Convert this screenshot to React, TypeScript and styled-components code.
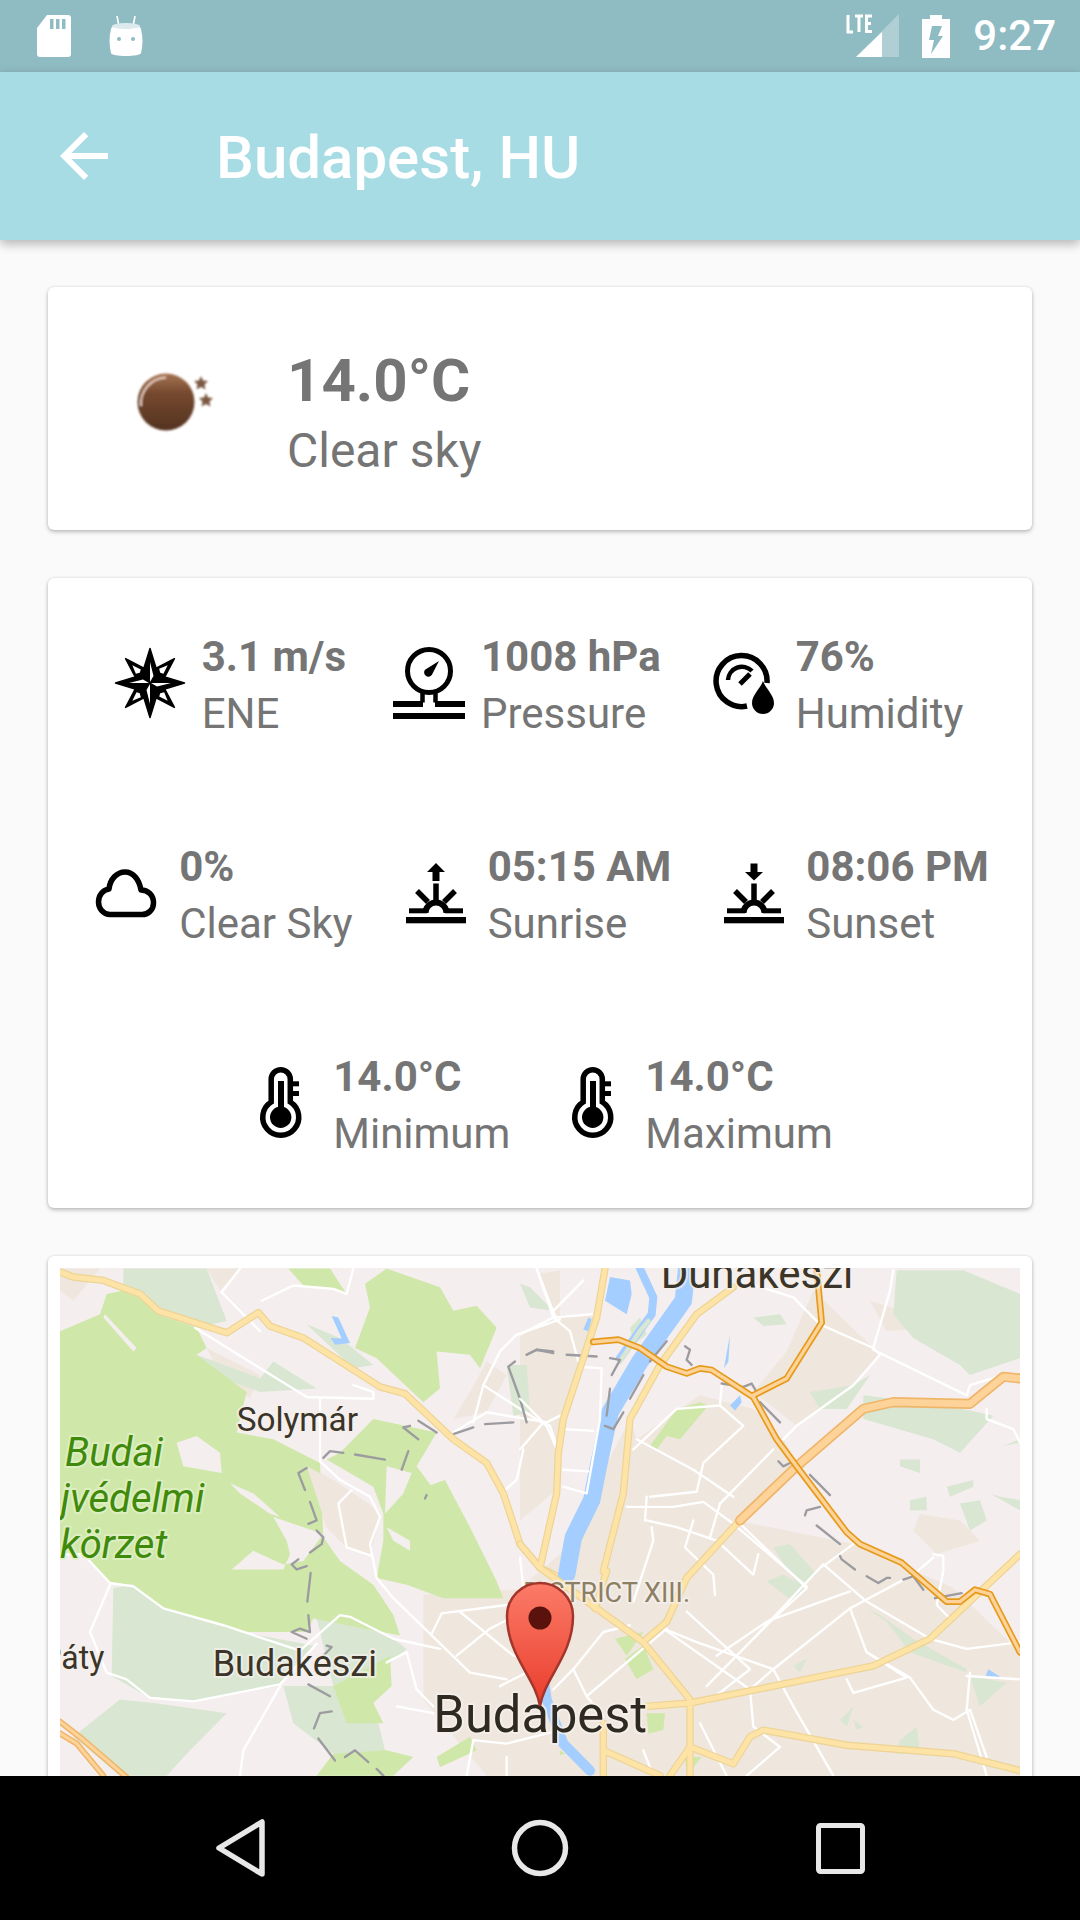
import React from "react";
import styled, { createGlobalStyle } from "styled-components";

const Global = createGlobalStyle`
  html, body { margin: 0; padding: 0; background: #fafafa; }
  body { font-family: Roboto, "Liberation Sans", sans-serif; }
`;

const Screen = styled.div`
  width: 1080px; height: 1920px; display: flex; flex-direction: column; overflow: hidden; background: #fafafa;
`;
const StatusBar = styled.div`
  height: 72px; flex: none; background: #8fbbc3; display: flex; align-items: center; justify-content: space-between; padding: 0 24px 0 37px; box-sizing: border-box;
`;
const StatusGroup = styled.div`
  display: flex; align-items: center; gap: ${(p: { $gap: number }) => p.$gap}px;
`;
const Clock = styled.span`
  color: #fff; font-size: 42px; font-weight: 500; line-height: 72px; margin-left: 1px;
`;
const AppBar = styled.header`
  height: 168px; flex: none; background: #a7dce5; display: flex; align-items: center; padding-left: 48px; gap: 96px; position: relative; z-index: 2;
  box-shadow: 0 4px 10px rgba(0,0,0,.28);
`;
const Title = styled.h1`
  margin: 4px 0 0; color: #fff; font-size: 60px; font-weight: 500; line-height: 72px;
`;
const Content = styled.main`
  flex: 1; min-height: 0; overflow: hidden; display: flex; flex-direction: column; gap: 48px; padding: 47px 48px 0;
`;
const Card = styled.section`
  background: #fff; border-radius: 6px; flex: none; box-shadow: 0 2px 4px rgba(0,0,0,.24), 0 0 3px rgba(0,0,0,.1);
`;
const SummaryCard = styled(Card)`
  height: 243px; display: flex; align-items: center; padding-left: 80px; gap: 46px; box-sizing: border-box;
`;
const WeatherSvg = styled.svg`
  display: block; flex: none; width: 113px; height: 70px; margin-bottom: 15px;
`;
const SummaryText = styled.div`
  display: flex; flex-direction: column; gap: 4px; padding-top: 8px;
`;
const Temperature = styled.div`
  font-size: 60px; font-weight: 700; line-height: 72px; color: #757575;
`;
const Condition = styled.div`
  font-size: 48px; line-height: 60px; color: #757575;
`;
const DetailsCard = styled(Card)`
  height: 630px; padding: 50px 0 0; box-sizing: border-box; display: flex; flex-direction: column; gap: 96px;
`;
const DetailRow = styled.div<{ $nudge: number }>`
  display: flex; justify-content: center; gap: 47px; padding-right: ${(p) => p.$nudge}px;
`;
const Detail = styled.div`
  display: flex; align-items: center; gap: 16px;
`;
const DetailText = styled.div`
  display: flex; flex-direction: column;
`;
const DetailValue = styled.div`
  font-size: 42px; font-weight: 700; line-height: 57px; color: #757575; white-space: nowrap;
`;
const DetailLabel = styled.div`
  font-size: 42px; line-height: 57px; color: #757575; white-space: nowrap;
`;
const MapCard = styled(Card)`
  padding: 12px; height: 600px; box-sizing: border-box;
`;
const MapSvg = styled.svg`
  display: block; width: 960px; height: 560px; background: #f5eeef;
`;
const NavBar = styled.nav`
  height: 144px; flex: none; background: #000; display: flex; align-items: center; justify-content: center; position: relative; z-index: 2;
`;
const NavIcon = styled.svg`
  display: block; width: 720px; height: 144px;
`;

type IconProps = { children: React.ReactNode };
const Glyph = styled.svg`
  display: block; flex: none; width: 72px; height: 72px; margin-bottom: 4px;
`;
const DetailIcon = ({ children }: IconProps) => <Glyph viewBox="0 0 72 72">{children}</Glyph>;

const polar = (n: number[], cx = 36, cy = 36) =>
  n.map((r, i) => {
    const a = (i * Math.PI) / 8 - Math.PI / 2;
    return `${(cx + r * Math.cos(a)).toFixed(2)},${(cy + r * Math.sin(a)).toFixed(2)}`;
  }).join(" ");

const Compass = () => (
  <DetailIcon>
    <polygon fill="#000" stroke="#000" strokeWidth="1.5" strokeLinejoin="round" points={polar([34.5,16,34.5,16,34.5,16,34.5,16,34.5,16,34.5,16,34.5,16,34.5,16])} />
    {[0, 90, 180, 270].map((r) => (
      <polygon key={r} transform={`rotate(${r} 36 36)`} fill="#fff" points="36,35 36,15 39.5,29" />
    ))}
    {[45, 135, 225, 315].map((r) => (
      <polygon key={r} transform={`rotate(${r} 36 36)`} fill="#fff" points="36,21.5 32.5,19.5 36,11 39,20" />
    ))}
  </DetailIcon>
);
const Pressure = () => (
  <DetailIcon>
    <circle cx="36" cy="24" r="21.5" fill="none" stroke="#000" strokeWidth="5" />
    <path d="M46 14 L38.8 28 A4 4 0 1 1 32 22.8 Z" fill="#000" />
    <path d="M29.5 43 V55.5 M42.5 43 V55.5" stroke="#000" strokeWidth="4.5" fill="none" />
    <rect x="0" y="54" width="30" height="6" />
    <rect x="42" y="54" width="30" height="6" />
    <rect x="0" y="66" width="72" height="6" />
  </DetailIcon>
);
const Humidity = () => (
  <DetailIcon>
    <path d="M59 36 A25.5 25.5 0 1 0 39 59" fill="none" stroke="#000" strokeWidth="5.5" />
    <path d="M20 33 A14 14 0 0 1 44 24" fill="none" stroke="#000" strokeWidth="4.5" />
    <path d="M32 37 L42 27" stroke="#000" strokeWidth="5" />
    <path d="M55 34 C58 42 66 48 66 56 A11 11 0 0 1 44 56 C44 48 52 42 55 34 Z" fill="#000" />
  </DetailIcon>
);
const Cloud = () => (
  <DetailIcon>
    <path d="M19 57.5 C12 57.5 7.5 51 7.5 45 C7.5 38 12 33 18 32 C19 22 26 15 34 15 C42 15 48 22 50 33 C57 33 62.5 38 62.5 46 C62.5 53 57 57.5 51 57.5 Z" fill="none" stroke="#000" strokeWidth="5.5" strokeLinejoin="round" />
  </DetailIcon>
);
const SunBase = () => (
  <>
    <rect x="6" y="60" width="60" height="6.3" />
    <rect x="9" y="51.3" width="18" height="5" />
    <rect x="45" y="51.3" width="18" height="5" />
    <path d="M25.5 56 A10.5 10.5 0 0 1 46.5 56" fill="none" stroke="#000" strokeWidth="6" />
    <path d="M36 26.5 V44 M17 34 L28 45 M55 34 L44 45" stroke="#000" strokeWidth="5.5" fill="none" />
  </>
);
const Sunrise = () => (
  <DetailIcon>
    <SunBase />
    <polygon points="36,6 45,15 39.5,15 39.5,24 32.5,24 32.5,15 27,15" />
  </DetailIcon>
);
const Sunset = () => (
  <DetailIcon>
    <SunBase />
    <polygon points="36,23.5 45,15 39.5,15 39.5,6.5 32.5,6.5 32.5,15 27,15" />
  </DetailIcon>
);
const Thermometer = () => (
  <DetailIcon>
    <path d="M26.2 35 V12.3 A9.5 9.5 0 0 1 45.3 12.3 V35 A18 18 0 1 1 26.2 35 Z" fill="none" stroke="#000" strokeWidth="5.5" />
    <rect x="33" y="14" width="6" height="30" />
    <circle cx="35.7" cy="50.3" r="10.7" />
    <rect x="47" y="14.3" width="7" height="5" />
    <rect x="47" y="24" width="7" height="5" />
  </DetailIcon>
);

const WeatherIcon = () => (
  <WeatherSvg viewBox="0 0 113 70">
    <defs>
      <linearGradient id="moon" x1="0" y1="0" x2="0" y2="1">
        <stop offset="0" stopColor="#a67452" />
        <stop offset=".35" stopColor="#75492f" />
        <stop offset="1" stopColor="#543320" />
      </linearGradient>
      <filter id="soft"><feGaussianBlur stdDeviation=".9" /></filter>
    </defs>
    <g filter="url(#soft)">
      <circle cx="38" cy="36" r="28.5" fill="url(#moon)" />
      <path d="M13 40 A26 26 0 0 1 38 11.5" fill="none" stroke="#e8d0bf" strokeWidth="2" />
      <polygon fill="#7a5843" points="73,10 75,14.5 80,15 76.5,18.5 77.5,23.5 73,21 68.5,23.5 69.5,18.5 66,15 71,14.5" />
      <polygon fill="#7a5843" points="78,27 80,31.5 85,32 81.5,35.5 82.5,40.5 78,38 73.5,40.5 74.5,35.5 71,32 76,31.5" />
    </g>
  </WeatherSvg>
);

const Line = (p: { d: number[]; c: string; w: number; dash?: string }) => (
  <polyline
    points={p.d.join(" ")} fill="none" stroke={p.c} strokeWidth={p.w} strokeDasharray={p.dash}
    strokeLinejoin="round" strokeLinecap="round"
  />
);

const GREEN = "#cfe8a9", LIGHT = "#d8e6d2", BEIGE = "#efe6dd", PINK = "#f5eeef", WATER = "#a3ceff", WHITE = "#ffffff";

const leftLight = [
  [220,1000,280,990,370,1060,600,1130,820,1170,720,1290,460,1335,320,1320,215,1260],
  [100,1440,240,1330,340,1340,560,1370,450,1480,380,1555,240,1555],
  [250,55,500,55,560,210,470,230,350,190,250,120],
  [470,310,660,380,700,330,830,410,660,420,520,370],
  [1400,340,1460,340,1470,480,1420,490],
  [380,550,590,490,580,530,470,560],
  [730,1290,880,1290,1000,1340,1040,1500,880,1490,760,1400],
  [830,1090,900,1060,1060,1150,1100,1180,1040,1230,880,1290],
  [800,220,900,260,1000,340,940,350],
];
const leftGreen = [
  [60,240,180,190,200,130,250,120,300,140,350,190,470,230,500,290,470,310,620,420,590,540,700,560,840,630,850,850,900,920,1000,990,1060,1080,1080,1140,820,1090,800,1130,600,1130,370,1060,280,990,210,985,130,900,60,900],
  [745,55,870,55,920,130,860,110,790,105],
  [975,100,1040,55,1200,110,1240,180,1310,165,1370,230,1320,350,1290,310,1190,300,1200,410,1150,450,1010,320,945,290,990,170],
  [1030,780,1100,720,1215,680,1290,820,1370,980,1390,1030,1210,1030,1100,990,1010,970,1030,860],
  [1000,500,1190,540,1130,640,1190,720,1030,780,1000,700,860,620,900,600],
  [880,1290,1050,1200,1055,1290,1000,1340,1030,1400,920,1400],
  [880,1490,1040,1480,1120,1500,1060,1555,830,1555],
  [1190,1500,1290,1440,1310,1480,1200,1530],
];
const leftPink = [
  [700,790,850,840,790,920,730,930,640,890,575,945,730,945,750,900,740,860],
  [410,570,470,550,540,600,545,660,430,640],
  [570,690,640,720,720,790,690,780,600,720],
  [195,190,290,290,280,300,190,200],
  [1040,640,1115,660,1090,720,1035,780],
  [1040,820,1110,860,1110,890,1060,860],
];
const leftBeige = [
  [800,640,880,680,1000,760,1020,790,990,900,920,880,860,820],
  [500,55,600,55,540,120],
  [1150,1020,1500,1000,1560,1000,1560,1555,1340,1555,1150,1330],
  [500,290,660,370,630,440,540,370],
  [1500,70,1560,60,1560,200,1520,160],
  [60,55,180,55,100,150,60,120],
  [1140,170,1240,290,1130,280,1050,260],
  [1340,330,1400,370,1340,480,1240,500,1290,420],
];
const rightBeige = [
  [350,560,540,430,700,470,790,560,840,640,650,800,1000,870,1300,1000,1500,1190,1500,1555,0,1555,0,1000,120,900,330,500],
  [0,250,100,200,230,190,130,500,120,700,0,800],
  [880,120,1060,290,1080,310,1000,400,830,520,700,420,800,300],
  [1210,200,1240,230,1100,240,1050,150],
  [1200,780,1320,800,1380,860,1250,900,1180,830],
];
const rightLight = [
  [1130,60,1330,60,1500,130,1500,320,1350,370,1320,340,1180,260,1120,190],
  [1030,430,1120,440,1330,470,1420,490,1320,600,1240,560,1100,520,1030,500],
  [870,420,1000,400,1050,370,980,470,900,470],
  [1140,620,1200,620,1200,660,1140,640],
  [1280,700,1360,680,1360,700,1290,730],
  [1170,740,1220,730,1220,770,1170,770],
  [1320,750,1380,740,1400,800,1350,830],
  [1410,720,1500,770,1500,740,1440,730],
  [760,880,810,870,890,960,840,1000],
  [740,980,790,960,860,1000,820,1040],
  [1040,1060,1100,1100,1170,1190,1340,1250,1340,1240,1180,1150,1080,1080],
  [1350,1260,1460,1280,1380,1350],
  [0,100,30,110,100,180,30,170],
  [700,200,780,190,800,220,730,225],
  [340,280,380,250,360,200,330,230],
  [960,1390,1000,1350,980,1410],
  [1000,1390,1030,1410,1010,1420],
  [1140,1450,1190,1410,1200,1490,1130,1490],
  [820,1230,860,1210,840,1250],
  [1450,580,1500,570,1500,560],
];
const rightGreen = [
  [390,580,470,470,540,450,565,460,480,560,440,550,410,590],
  [130,870,195,780,190,850,130,960],
  [285,1150,370,1130,320,1200],
  [315,1210,370,1170,400,1240,350,1270],
  [380,1370,435,1370,430,1420,385,1430],
  [60,1490,100,1465,135,1490,85,1505],
  [495,1500,545,1500,500,1555],
];
const rightWater = [
  [270,80,330,90,335,130,320,190,255,150],
  [630,460,660,430,665,450,645,475],
  [1395,1265,1405,1240,1445,1265],
  [190,235,205,200,215,205,205,240],
  [612,350,630,250,625,330],
];
const leftWhite = [
  [465,230,800,435,1000,440],[545,125,600,55],[545,125,660,240],[665,150,760,105,880,115,920,130,940,55],
  [840,440,840,625,900,680,990,730,1020,790,990,870,1010,970,1060,1030,1290,1250,1400,1270],
  [935,710,895,750,920,880,995,905],
  [60,900,130,900,210,985,280,995,370,1060,550,1110,780,1185,900,1080,930,1085,1060,1150,1200,1180],
  [210,990,150,1130,200,1250,260,1270,330,1325,460,1335,720,1285,830,1165],
  [720,1290,610,1480,600,1555],[1175,1135,1205,1075,1400,1050],[1250,1200,1350,1120,1410,1090],
  [1260,1070,1420,1200,1500,1220],[1380,1290,1500,1230],[1070,1350,1180,1370],
  [1040,1220,1100,1190,1130,1300,1180,1350],[1240,540,1340,480,1520,510,1560,490],[1330,400,1300,510],
  [1330,400,1380,300,1430,250,1560,205],[1490,55,1550,210],[1520,520,1555,600],[1330,400,1520,520],
  [1450,590,1430,680,1395,710],[1400,1500,1400,1555],[1280,1555,1300,1450,1400,1460,1560,1420],
  [940,400,1000,420,1000,440],[1440,910,1450,1000],
];
const rightWhite = [
  [50,55,100,200,0,250],[100,200,215,190],[100,180,190,90],[100,200,150,240,175,330],
  [175,345,245,350,240,500,200,720,130,700],[130,530,220,535],[130,650,205,655],
  [0,440,70,510,90,520,110,580],[0,590,70,510],[350,560,520,650,640,730],
  [320,760,460,760,550,745,640,810,860,995],[390,730,530,715,550,630,670,520,600,460,605,400],
  [600,460,470,470,340,590],[380,800,470,820,590,860,700,960,715,900],[395,820,400,860,340,1040],
  [380,730,375,800],[520,800,495,880,580,960,585,1020],[600,750,570,850],[600,750,760,590],
  [650,800,860,1000,750,1100,560,1290],[790,560,830,520,1000,400,1080,310,1060,290,900,220,820,140,690,100],
  [1060,290,1110,120,1120,60],[1060,295,1340,430,1350,400,1450,370],
  [910,930,1040,1040,1230,1150,1340,1180,1500,1160],[910,930,700,1150],[1240,900,1270,905,1270,950,1250,1050,1290,1090],
  [1000,870,910,935],[1180,960,1240,910],[990,1010,750,1095,740,1100,590,1200],[1180,960,990,1060,760,1240,690,1300],
  [430,1120,690,1300,700,1410],[430,1120,530,1160,760,1240,820,1350],[440,1120,200,1320],
  [500,1070,690,1240,560,1340],[160,1240,250,1130,330,1110],[990,1060,1040,1190,1160,1265,1000,1310,980,1270],
  [1040,1190,1170,1265,1240,1360,1300,1390,1350,1360,1400,1500],[1350,1250,1340,1360],[1340,1260,1500,1270],
  [1400,470,1400,500,1480,530,1500,570],[700,1410,780,1470,680,1555],[820,1350,940,1555],[540,1400,620,1555],
  [100,1300,160,1240,200,1320,250,1380],[1340,1360,1400,1555],[370,1480,400,1555],
];
const leftDash = [
  [1240,545,1300,525],[1335,515,1420,510],[1460,510,1440,440,1405,345,1425,330],[1460,310,1490,295,1540,305],
  [1190,540,1135,505],[1135,560,1090,525,1110,520],[1105,595,1085,650],[1035,620,945,605],[910,600,870,595,850,615],
  [800,645,775,660,795,710],[810,745,830,800,805,810],[830,830,850,850,845,870,810,895],[775,915,755,930,770,945,800,935],
  [812,955,802,1040],[805,1080,810,1130,780,1120,755,1130,800,1150],[860,1170,875,1175,850,1200],[805,1285,870,1320],
  [875,1365,840,1370,822,1415],[835,1445,885,1510],[915,1500,945,1480,985,1515],[1010,1535,1030,1555],[1160,725,1155,735],
];
const rightDash = [
  [20,310,50,295,100,300],[140,310,230,315],[270,320,300,325,275,370],[270,410,260,490],[310,480,280,530,255,520],
  [330,440,370,370],[390,330,440,270],[495,285,510,295,500,325,515,340],[605,395,670,405,695,395,710,420],[720,450,780,510],
  [775,625,790,640,810,630],[870,665,930,725],[900,760,860,770,855,785],[890,815,960,870],[960,905,965,915,1005,945],
  [1040,965,1075,985,1100,970,1110,970],[1150,975,1180,965,1210,1005],[1245,1030,1325,1015],
];
const rightRoads = [
  [60,940,110,720,115,600,130,500,230,200,255,55],
  [0,870,60,940,230,1060,370,1160,510,1330,510,1555],
  [250,950,310,720,330,500,420,340,530,190,640,110],
  [380,1150,440,1100,500,970,650,810],
  [380,1350,510,1340,1060,1230,1230,1150,1500,900],
  [1500,1540,1300,1490,980,1465,730,1420,690,1440,640,1520,510,1470,450,1555],
  [250,1480,420,1555],[260,950,225,1060],[250,1400,250,1555],
];
const leftRoad = [60,65,100,80,190,90,300,130,355,180,560,245,655,185,690,225,790,260,1020,405,1095,425,1240,560,1340,630,1390,720,1440,870,1500,940,1560,970];

const Poly = ({ sets, fill }: { sets: number[][]; fill: string }) => (
  <>{sets.map((s, i) => <polygon key={i} points={s.join(" ")} fill={fill} />)}</>
);
const Many = ({ sets, c, w, dash }: { sets: number[][]; c: string; w: number; dash?: string }) => (
  <>{sets.map((s, i) => <Line key={i} d={s} c={c} w={w} dash={dash} />)}</>
);
const Label = styled.text<{ $halo?: string }>`
  font-family: Roboto, "Liberation Sans", sans-serif;
  paint-order: stroke; stroke: ${(p) => p.$halo ?? "rgba(245,240,236,.75)"}; stroke-width: 12px; stroke-linejoin: round;
`;

const LEFT = "translate(40 1250) scale(.33333 .33806)";
const RIGHT = "translate(520 1250) scale(.33333 .33806)";

const MapDrawing = () => (
  <MapSvg viewBox="60 1268 960 560">
    <defs>
      <linearGradient id="pin" x1="0" y1="0" x2="0" y2="1">
        <stop offset="0" stopColor="#fb7b68" />
        <stop offset="1" stopColor="#ea3d2c" />
      </linearGradient>
    </defs>
    <g transform={RIGHT}>
      <Poly sets={rightBeige} fill={BEIGE} />
      <Poly sets={rightLight} fill={LIGHT} />
      <Poly sets={rightGreen} fill={GREEN} />
    </g>
    <g transform={LEFT}>
      <Poly sets={leftBeige} fill={BEIGE} />
      <Poly sets={leftLight} fill={LIGHT} />
      <Poly sets={leftGreen} fill={GREEN} />
      <Poly sets={leftPink} fill={PINK} />
      <polygon points="800,640 880,680 1000,760 1020,790 990,900 920,880 860,820" fill={BEIGE} />
      <polygon points="875,195 895,200 930,275 885,280 872,260 905,262" fill={WATER} />
      <Many sets={leftWhite} c={WHITE} w={7} />
      <Many sets={leftDash} c="#9c9ca0" w={7} />
      <Line d={leftRoad} c="#edd394" w={22} />
      <Line d={leftRoad} c="#fde3a6" w={15} />
      <Line d={[60,1395,125,1445,260,1560]} c="#efb66a" w={18} />
      <Line d={[60,1430,110,1460,190,1555]} c="#efb66a" w={18} />
      <Line d={[60,1395,125,1445,260,1560]} c="#fdd39a" w={9} />
      <Line d={[60,1430,110,1460,190,1555]} c="#fdd39a" w={9} />
    </g>
    <g transform={RIGHT}>
      <Line d={[500,55,490,150,360,330,270,480,235,640,215,740,160,850,140,960]} c={WATER} w={52} />
      <Line d={[360,55,400,140,395,190,300,320]} c={WATER} w={24} />
      <Line d={[60,1200,80,1330,130,1460,210,1540]} c={WATER} w={30} />
      <Poly sets={rightWater} fill={WATER} />
      <Line d={[300,330,360,240,385,210]} c={LIGHT} w={14} />
      <Many sets={rightWhite} c={WHITE} w={7} />
      <Many sets={rightDash} c="#9c9ca0" w={7} />
      <Many sets={rightRoads} c="#edd394" w={22} />
      <Many sets={rightRoads} c="#fde3a6" w={15} />
      <Line d={[660,800,830,640,1030,470,1120,450,1350,455,1450,375,1500,380]} c="#efb66a" w={30} />
      <Line d={[660,800,830,640,1030,470,1120,450,1350,455,1450,375,1500,380]} c="#fdd39a" w={20} />
      <Line d={[220,272,295,265,360,290,440,345,500,365,540,350,575,355,700,435,770,560,830,640,980,835,1020,870,1145,925,1280,1040,1320,1040,1365,1005,1410,1018,1500,1190]} c="#e69a1a" w={20} />
      <Line d={[700,430,800,380,905,215,890,55]} c="#e69a1a" w={20} />
      <Line d={[220,272,295,265,360,290,440,345,500,365,540,350,575,355,700,435,770,560,830,640,980,835,1020,870,1145,925,1280,1040,1320,1040,1365,1005,1410,1018,1500,1190]} c="#fdd39a" w={10} />
      <Line d={[700,430,800,380,905,215,890,55]} c="#fdd39a" w={10} />
      <Label x="422" y="112" fontSize="126" fill="#3b3428" $halo="rgba(245,240,236,.7)">Dunakeszi</Label>
      <Label x="10" y="1042" fontSize="81" fill="#8c7f63">DISTRICT XIII.</Label>
    </g>
    <g transform={LEFT}>
      <Label x="590" y="535" fontSize="100" fill="#3b3428">Solymár</Label>
      <Label x="518" y="1260" fontSize="108" fill="#3b3428">Budakeszi</Label>
      <Label x="4" y="1240" fontSize="96" fill="#3b3428">Páty</Label>
      <Label x="75" y="640" fontSize="120" fontStyle="italic" fill="#3f8a0a" $halo="rgba(225,240,200,.8)">Budai</Label>
      <Label x="62" y="775" fontSize="120" fontStyle="italic" fill="#3f8a0a" $halo="rgba(225,240,200,.8)">jvédelmi</Label>
      <Label x="60" y="910" fontSize="120" fontStyle="italic" fill="#3f8a0a" $halo="rgba(225,240,200,.8)">körzet</Label>
      <Label x="1180" y="1425" fontSize="152" fill="#2e2a22">Budapest</Label>
    </g>
    <path d="M540 1706 C535 1677 507 1655 507 1616 A33 33 0 0 1 573 1616 C573 1655 545 1677 540 1706 Z" fill="url(#pin)" stroke="#a3352a" strokeWidth="2.5" />
    <circle cx="540" cy="1618" r="11.5" fill="#5a120c" />
  </MapSvg>
);

const StatusIcons = {
  Sd: () => (
    <svg width="34" height="42" viewBox="0 0 34 42">
      <path d="M10 0 H31 A3 3 0 0 1 34 3 V39 A3 3 0 0 1 31 42 H3 A3 3 0 0 1 0 39 V13 Z" fill="#fff" />
      <path d="M13 4 H16.5 V14 H13 Z M19 4 H22.5 V14 H19 Z M25 4 H28.5 V14 H25 Z" fill="#8fbbc3" />
    </svg>
  ),
  Android: () => (
    <svg width="36" height="42" viewBox="0 0 36 42">
      <path d="M9 1 L10.5 9 M27 1 L25.5 9" stroke="#fff" strokeWidth="1.6" />
      <path d="M3 14 C3 8 33 8 33 14 C35 22 35 30 33 38 C33 42 3 42 3 38 C1 30 1 22 3 14 Z" fill="#fff" />
      <ellipse cx="18" cy="11" rx="14" ry="3" fill="#dceaed" />
      <circle cx="11" cy="24" r="2" fill="#8fbbc3" />
      <circle cx="25" cy="24" r="2" fill="#8fbbc3" />
    </svg>
  ),
  Signal: () => (
    <svg width="54" height="44" viewBox="0 0 54 44">
      <polygon points="10,43 53,0 53,43" fill="#fff" fillOpacity=".3" />
      <polygon points="10,43 36,18 36,43" fill="#fff" />
      <path d="M2 1 V18 H7 M9 2 H17 M13 2 V18 M26 2 H20.5 V17.5 H26 M20.5 9.5 H25" fill="none" stroke="#fff" strokeWidth="3" />
    </svg>
  ),
  Battery: () => (
    <svg width="28" height="43" viewBox="0 0 28 43">
      <path d="M8 0 H20 V4 H28 V43 H0 V4 H8 Z" fill="#fff" />
      <path d="M10 11 H20 L16 21 H21 L9 39 L12 25 H7 Z" fill="#8fbbc3" />
    </svg>
  ),
};

const rows = [
  {
    nudge: 3,
    items: [
      { icon: <Compass />, value: "3.1 m/s", label: "ENE" },
      { icon: <Pressure />, value: "1008 hPa", label: "Pressure" },
      { icon: <Humidity />, value: "76%", label: "Humidity" },
    ],
  },
  {
    nudge: 0,
    items: [
      { icon: <Cloud />, value: "0%", label: "Clear Sky" },
      { icon: <Sunrise />, value: "05:15 AM", label: "Sunrise" },
      { icon: <Sunset />, value: "08:06 PM", label: "Sunset" },
    ],
  },
  {
    nudge: 2,
    items: [
      { icon: <Thermometer />, value: "14.0°C", label: "Minimum" },
      { icon: <Thermometer />, value: "14.0°C", label: "Maximum" },
    ],
  },
];

export default function App() {
  return (
    <Screen>
      <Global />
      <StatusBar>
        <StatusGroup $gap={37}>
          <StatusIcons.Sd />
          <StatusIcons.Android />
        </StatusGroup>
        <StatusGroup $gap={22}>
          <StatusIcons.Signal />
          <StatusIcons.Battery />
          <Clock>9:27</Clock>
        </StatusGroup>
      </StatusBar>
      <AppBar>
        <svg width="72" height="72" viewBox="0 0 24 24" fill="#fff">
          <path d="M20 11H7.83l5.59-5.59L12 4l-8 8 8 8 1.41-1.41L7.83 13H20v-2z" />
        </svg>
        <Title>Budapest, HU</Title>
      </AppBar>
      <Content>
        <SummaryCard>
          <WeatherIcon />
          <SummaryText>
            <Temperature>14.0°C</Temperature>
            <Condition>Clear sky</Condition>
          </SummaryText>
        </SummaryCard>
        <DetailsCard>
          {rows.map((row, i) => (
            <DetailRow key={i} $nudge={row.nudge}>
              {row.items.map((d) => (
                <Detail key={d.label}>
                  {d.icon}
                  <DetailText>
                    <DetailValue>{d.value}</DetailValue>
                    <DetailLabel>{d.label}</DetailLabel>
                  </DetailText>
                </Detail>
              ))}
            </DetailRow>
          ))}
        </DetailsCard>
        <MapCard>
          <MapDrawing />
        </MapCard>
      </Content>
      <NavBar>
        <NavIcon viewBox="180 1776 720 144">
          <path d="M262 1822 V1874 L219 1848 Z" fill="none" stroke="#e8e8e8" strokeWidth="5.5" strokeLinejoin="round" />
          <circle cx="540" cy="1848" r="25.5" fill="none" stroke="#e8e8e8" strokeWidth="5.5" />
          <rect x="818.5" y="1825.5" width="44" height="46" rx="2" fill="none" stroke="#e8e8e8" strokeWidth="5" />
        </NavIcon>
      </NavBar>
    </Screen>
  );
}
